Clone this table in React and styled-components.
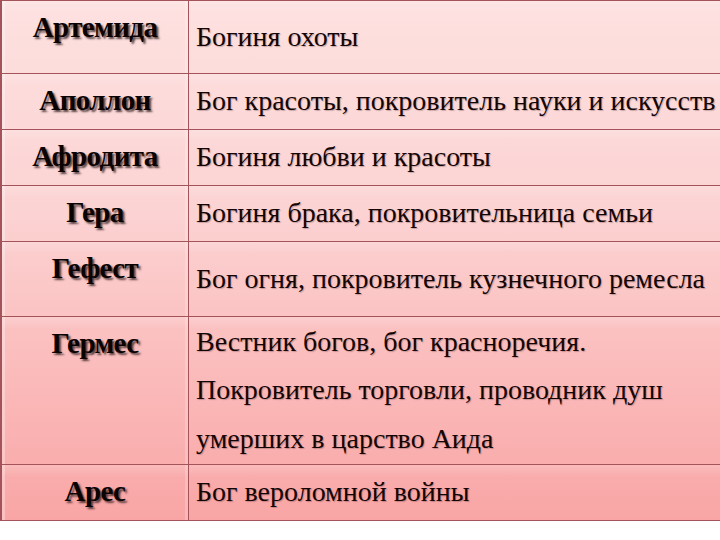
import React from "react";
import styled, { createGlobalStyle } from "styled-components";

const Global = createGlobalStyle`
  html, body { margin: 0; padding: 0; background: #ffffff; }
  body { width: 720px; height: 540px; overflow: hidden; }
`;

const Table = styled.div`
  width: 720px;
  display: flex;
  flex-direction: column;
  border-top: 1px solid #a5535a;
  border-left: 2px solid #a5535a;
  box-sizing: border-box;
  background: linear-gradient(180deg, #fde1e0 0%, #fcd3d3 40%, #fbbcbc 70%, #f9a5a5 100%);
  overflow: hidden;
`;

const Row = styled.div`
  display: grid;
  grid-template-columns: 187px 1fr;
  height: ${(p) => p.$h}px;
  box-sizing: border-box;
  border-bottom: 1px solid #a5535a;
  background: linear-gradient(180deg, rgba(255, 255, 255, 0.18) 0px, rgba(255, 255, 255, 0) 12px);
`;

const NameCell = styled.div`
  border-right: 1px solid #a5535a;
  box-shadow: inset 3px 0 0 rgba(255, 255, 255, 0.3), inset -3px 0 0 rgba(255, 255, 255, 0.2);
  text-align: center;
  font-family: "Liberation Serif", "DejaVu Serif", serif;
  font-weight: bold;
  font-size: 29px;
  line-height: 52px;
  color: #0a0303;
  text-shadow: 2px 2px 2px rgba(50, 30, 30, 0.8);
  letter-spacing: -0.6px;
`;

const DescCell = styled.div`
  display: flex;
  flex-direction: column;
  justify-content: center;
  padding-left: 7px;
  font-family: "Liberation Serif", "DejaVu Serif", serif;
  font-size: 28px;
  line-height: 48.5px;
  color: #140505;
  text-shadow: 1px 1px 1px rgba(80, 40, 40, 0.3);
  white-space: nowrap;
`;

const rows = [
  { name: "Артемида", h: 73, lines: ["Богиня охоты"] },
  { name: "Аполлон", h: 56, lines: ["Бог красоты, покровитель науки и искусств"] },
  { name: "Афродита", h: 56, lines: ["Богиня любви и красоты"] },
  { name: "Гера", h: 56, lines: ["Богиня брака, покровительница семьи"] },
  { name: "Гефест", h: 75, lines: ["Бог огня, покровитель кузнечного ремесла"] },
  {
    name: "Гермес",
    h: 148,
    lines: [
      "Вестник богов, бог красноречия.",
      "Покровитель торговли, проводник душ",
      "умерших в царство Аида",
    ],
  },
  { name: "Арес", h: 56, lines: ["Бог вероломной войны"] },
];

export default function App() {
  return (
    <>
      <Global />
      <Table>
        {rows.map((r) => (
          <Row key={r.name} $h={r.h}>
            <NameCell>{r.name}</NameCell>
            <DescCell>
              {r.lines.map((l) => (
                <div key={l}>{l}</div>
              ))}
            </DescCell>
          </Row>
        ))}
      </Table>
    </>
  );
}
